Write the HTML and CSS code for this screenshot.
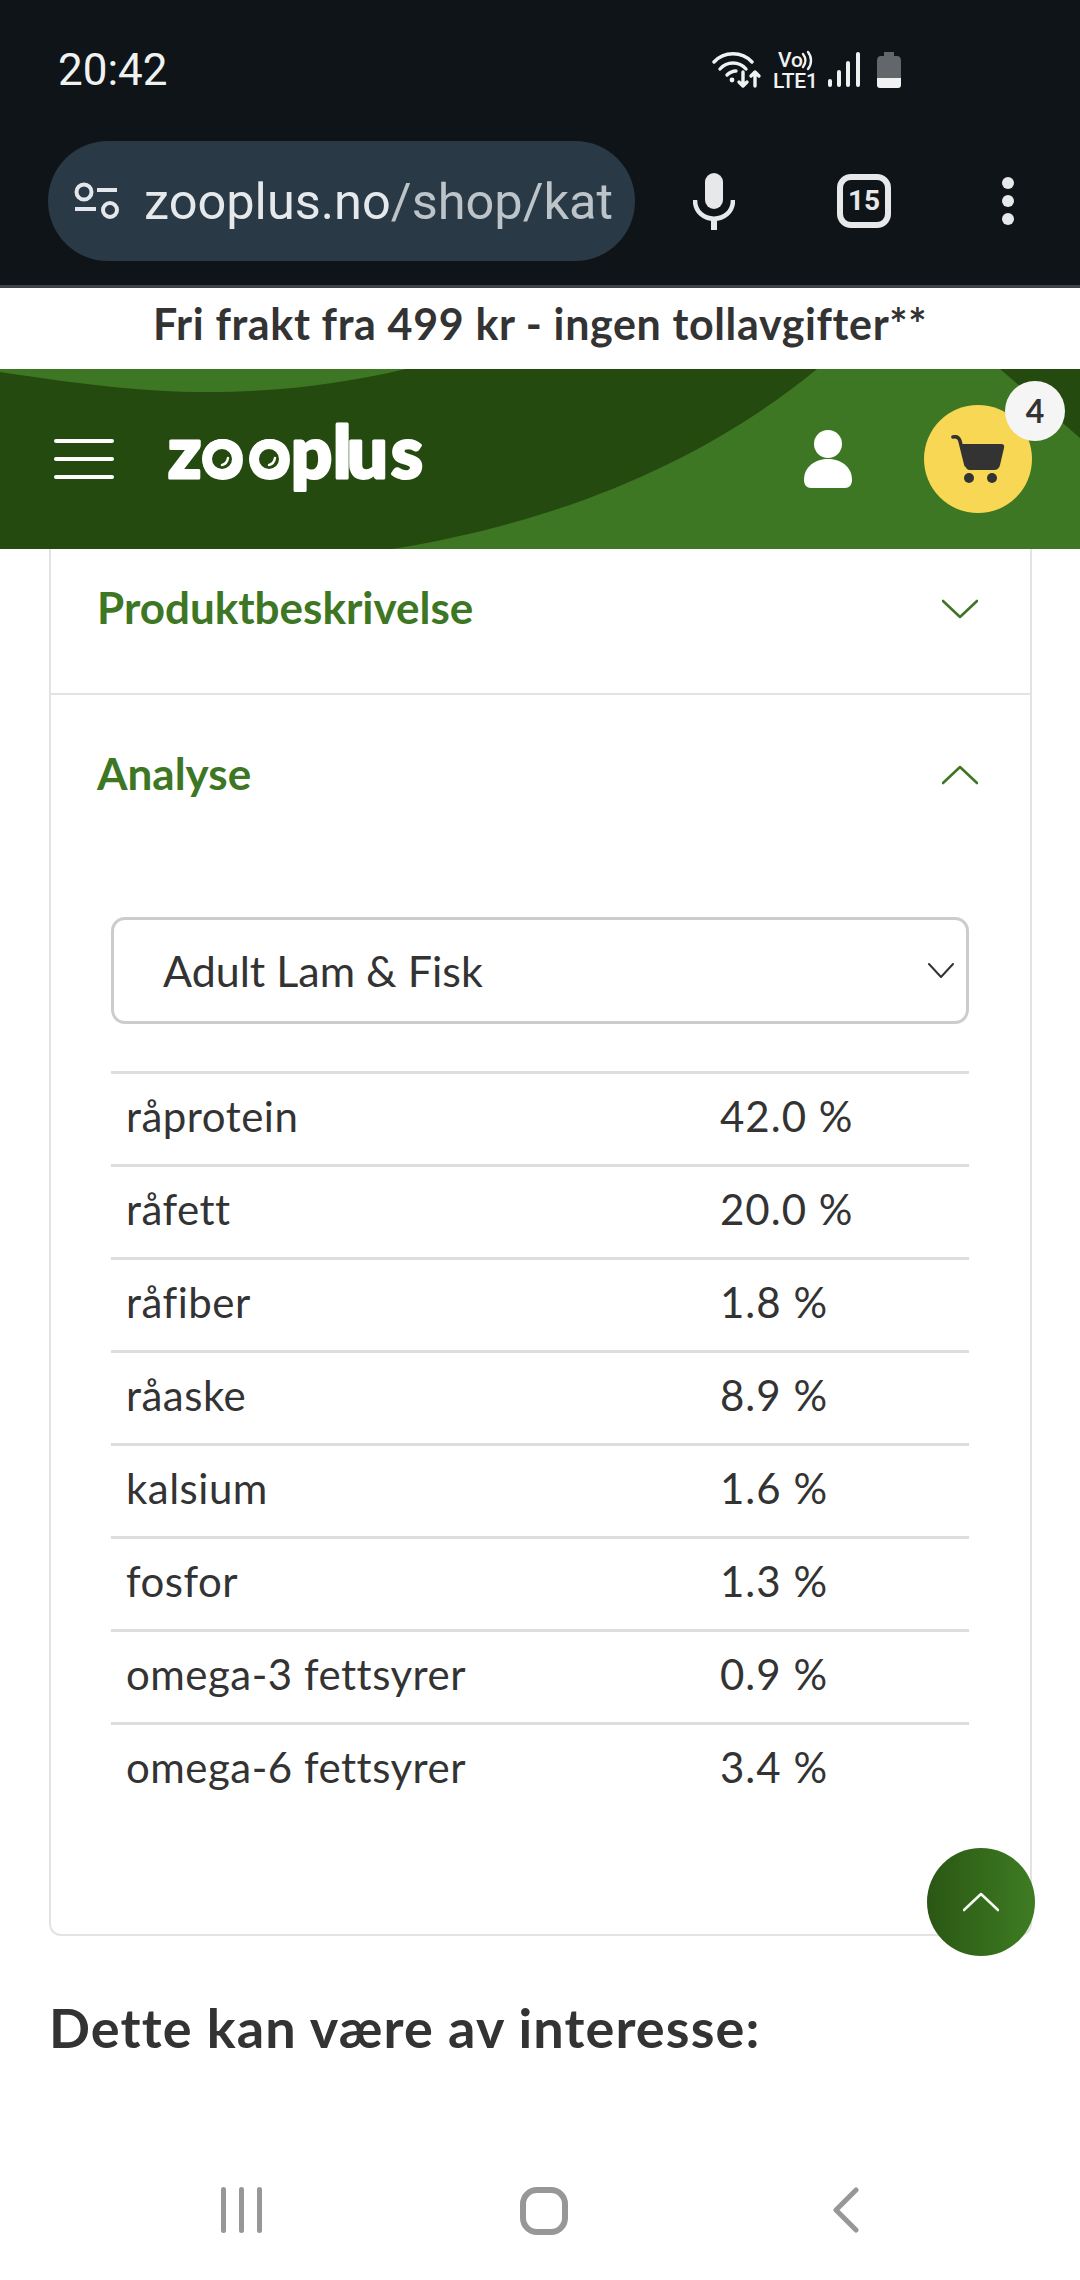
FILE: index.html
```html
<!DOCTYPE html>
<html lang="no">
<head>
  <meta charset="UTF-8" />
  <meta name="viewport" content="width=device-width, initial-scale=1.0"/>
  <title>zooplus - Analyse</title>
  <link rel="stylesheet" href="styles.css">
</head>
<body>

  <!-- Statuslinje og adressefelt -->
  <div class="browser">
    <div class="status">
      <span class="tid">20:42</span>
      <div class="status-ikoner">
        <svg class="ikon-wifi" viewBox="0 0 50 38" fill="none" stroke="#f0f2f2" stroke-width="3.4" stroke-linecap="round" stroke-linejoin="round">
          <path d="M2 11 C12 0 30 0 40 11"/>
          <path d="M8 18 C15 10 27 10 34 18"/>
          <path d="M15 24 C18 21 21 20 24 20"/>
          <circle cx="20" cy="29" r="2.4" fill="#f0f2f2" stroke="none"/>
          <path d="M31 21 V35 M27 31 L31 35 L35 31"/>
          <path d="M43 35 V21 M39 25 L43 21 L47 25"/>
        </svg>
        <svg class="ikon-volte" viewBox="0 -6 46 50">
          <text x="5" y="16" class="volte-tekst">Vo</text>
          <path d="M30 3 C33 7 33 12 30 16 M35 1 C39 6 39 13 35 18" fill="none" stroke="#f0f2f2" stroke-width="2.4" stroke-linecap="round"/>
          <text x="0" y="37" textLength="45" class="volte-tekst">LTE1</text>
        </svg>
        <svg class="ikon-signal" viewBox="0 0 32 36" fill="#f0f2f2">
          <rect x="0" y="27" width="4" height="8" rx="2"/>
          <rect x="9" y="18" width="4" height="17" rx="2"/>
          <rect x="18" y="9" width="4" height="26" rx="2"/>
          <rect x="28" y="0" width="4" height="35" rx="2"/>
        </svg>
        <svg class="ikon-batteri" viewBox="0 0 24 36">
          <path d="M7 0 H17 V4 H20 Q24 4 24 9 V26 H0 V9 Q0 4 4 4 H7 Z" fill="#63676b"/>
          <path d="M0 26 H24 V33 Q24 36 21 36 H3 Q0 36 0 33 Z" fill="#f0f2f2"/>
        </svg>
      </div>
    </div>
    <div class="verktoy">
      <div class="adressefelt">
        <svg class="ikon-tune" viewBox="0 0 46 38" fill="none" stroke="#e3e6ea" stroke-width="4">
          <circle cx="11" cy="10" r="7.5"/>
          <path d="M24 8 H44"/>
          <path d="M2 27 H23"/>
          <circle cx="37" cy="28" r="7"/>
        </svg>
        <span class="url">zooplus.no<span class="url-sti">/shop/kat</span></span>
      </div>
      <svg class="ikon-mic" viewBox="0 0 42 57">
        <rect x="12" y="0" width="18" height="36" rx="9" fill="#e6e8ea"/>
        <path d="M2 27 C2 52 40 52 40 27" fill="none" stroke="#e6e8ea" stroke-width="4.5"/>
        <rect x="18" y="44" width="6" height="13" fill="#e6e8ea"/>
      </svg>
      <div class="faner">15</div>
      <div class="meny-prikker"><i></i><i></i><i></i></div>
    </div>
  </div>

  <div class="frakt">Fri frakt fra 499 kr - ingen tollavgifter**</div>

  <header class="topp">
    <svg class="topp-bg" viewBox="0 0 1080 180" preserveAspectRatio="none">
      <rect width="1080" height="180" fill="#3e7723"/>
      <path d="M0 0 H817 C720 80 580 150 392 180 H0 Z" fill="#254a10"/>
      <path d="M0 3 C80 15 140 23 207 23 C280 23 340 15 406 0 H0 Z" fill="#3e7723"/>
      <path d="M1000 0 L1080 69 V0 Z" fill="#254a10"/>
    </svg>
    <div class="hamburger"><i></i><i></i><i></i></div>
    <svg class="logo" viewBox="-10 -10 280 120">
      <text x="2 36 83 125 167 181 225" y="69" class="logo-tekst">zooplus</text>
      <circle cx="56" cy="50" r="20" fill="#fff"/>
      <circle cx="103" cy="50" r="20" fill="#fff"/>
      <circle cx="56" cy="50" r="10" fill="#254a10"/>
      <circle cx="103" cy="50" r="10" fill="#254a10"/>
      <path d="M62 49 Q61 55 56 56" fill="none" stroke="#fff" stroke-width="2.4" stroke-linecap="round"/>
      <path d="M109 49 Q108 55 103 56" fill="none" stroke="#fff" stroke-width="2.4" stroke-linecap="round"/>
    </svg>
    <svg class="ikon-bruker" viewBox="0 0 48 58" fill="#fff">
      <circle cx="24" cy="14" r="14"/>
      <path d="M0 50 C0 22 48 22 48 50 C48 55 45 58 41 58 H7 C3 58 0 55 0 50 Z"/>
    </svg>
    <div class="handlekurv">
      <svg viewBox="0 0 54 48">
        <path d="M2 2 C6 1 8 3 9 6 L15 30" fill="none" stroke="#333" stroke-width="3.6" stroke-linecap="round"/>
        <path d="M11 9 H50 Q54 9 53 13 L49 30 Q48 35 43 35 H19 Q15 35 14 30 Z" fill="#333"/>
        <circle cx="18" cy="43" r="5" fill="#333"/>
        <circle cx="41" cy="43" r="5" fill="#333"/>
      </svg>
      <span class="antall">4</span>
    </div>
  </header>

  <main>
    <section class="kort">
      <div class="trekkspill-rad lukket">
        <h3>Produktbeskrivelse</h3>
        <svg class="pil" viewBox="0 0 36 20" fill="none" stroke="#3e7723" stroke-width="2.6" stroke-linecap="round" stroke-linejoin="round"><path d="M1 2 L18 18 L35 2"/></svg>
      </div>
      <div class="trekkspill-rad">
        <h3>Analyse</h3>
        <svg class="pil" viewBox="0 0 36 20" fill="none" stroke="#3e7723" stroke-width="2.6" stroke-linecap="round" stroke-linejoin="round"><path d="M1 18 L18 2 L35 18"/></svg>
      </div>
      <div class="analyse">
        <div class="velger">
          <span>Adult Lam &amp; Fisk</span>
          <svg viewBox="0 0 26 15" fill="none" stroke="#333" stroke-width="2" stroke-linecap="round" stroke-linejoin="round"><path d="M1 1 L13 14 L25 1"/></svg>
        </div>
        <table>
          <tr><td>råprotein</td><td>42.0 %</td></tr>
          <tr><td>råfett</td><td>20.0 %</td></tr>
          <tr><td>råfiber</td><td>1.8 %</td></tr>
          <tr><td>råaske</td><td>8.9 %</td></tr>
          <tr><td>kalsium</td><td>1.6 %</td></tr>
          <tr><td>fosfor</td><td>1.3 %</td></tr>
          <tr><td>omega-3 fettsyrer</td><td>0.9 %</td></tr>
          <tr><td>omega-6 fettsyrer</td><td>3.4 %</td></tr>
        </table>
      </div>
    </section>
    <h2>Dette kan være av interesse:</h2>
    <div class="til-toppen">
      <svg viewBox="0 0 36 20" fill="none" stroke="#f5f7f2" stroke-width="2.6" stroke-linecap="round" stroke-linejoin="round"><path d="M1 18 L18 2 L35 18"/></svg>
    </div>
  </main>

  <nav class="android-nav">
    <svg class="nav-siste" viewBox="0 0 41 46" fill="#979797">
      <rect x="0" y="0" width="5" height="46" rx="2.5"/>
      <rect x="18" y="0" width="5" height="46" rx="2.5"/>
      <rect x="36" y="0" width="5" height="46" rx="2.5"/>
    </svg>
    <svg class="nav-hjem" viewBox="0 0 48 48" fill="none" stroke="#979797" stroke-width="6"><rect x="3" y="3" width="42" height="42" rx="14"/></svg>
    <svg class="nav-tilbake" viewBox="0 0 26 46" fill="none" stroke="#979797" stroke-width="5" stroke-linecap="round" stroke-linejoin="round"><path d="M23 3 L3 23 L23 43" /></svg>
  </nav>

</body>
</html>
```

FILE: styles.css
```css
* {
  box-sizing: border-box;
}

body {
  font-family: 'Lato', 'Noto Sans', sans-serif;
  margin: 0;
  width: 1080px;
  height: 2280px;
  overflow: hidden;
  background: #fff;
  color: #333;
  display: flex;
  flex-direction: column;
}

/* nettleser */
.browser {
  background: #0f1418;
  height: 288px;
  border-bottom: 3px solid #3c4449;
  font-family: 'Roboto', sans-serif;
}

.status {
  display: flex;
  justify-content: space-between;
  align-items: center;
  padding: 46px 179px 0 58px;
  height: 94px;
}

.tid {
  color: #f0f2f2;
  font-size: 44px;
  line-height: 48px;
}

.status-ikoner {
  display: flex;
  align-items: center;
  height: 38px;
}

.ikon-wifi {
  width: 50px;
  height: 38px;
}

.ikon-volte {
  width: 46px;
  height: 50px;
  margin-left: 11px;
}

.volte-tekst {
  font-family: 'Roboto', sans-serif;
  font-size: 21px;
  font-weight: 500;
  fill: #f0f2f2;
}

.ikon-signal {
  width: 32px;
  height: 36px;
  margin-left: 9px;
}

.ikon-batteri {
  width: 24px;
  height: 36px;
  margin-left: 17px;
}

.verktoy {
  display: flex;
  align-items: center;
  margin-top: 47px;
  padding-left: 48px;
}

.adressefelt {
  width: 587px;
  height: 120px;
  border-radius: 60px;
  background: #293945;
  display: flex;
  align-items: center;
  padding-left: 25px;
}

.ikon-tune {
  width: 46px;
  height: 38px;
  flex: none;
}

.url {
  margin-left: 25px;
  color: #e6e9ec;
  font-size: 50.5px;
  white-space: nowrap;
}

.url-sti {
  color: #bcc4ca;
}

.ikon-mic {
  width: 42px;
  height: 57px;
  margin-left: 58px;
}

.faner {
  width: 54px;
  height: 54px;
  margin-left: 102px;
  border: 6px solid #e6e8ea;
  border-radius: 14px;
  color: #e6e8ea;
  font-size: 28px;
  font-weight: 700;
  text-align: center;
  line-height: 42px;
}

.meny-prikker {
  margin-left: 111px;
  display: flex;
  flex-direction: column;
  gap: 6px;
}

.meny-prikker i {
  display: block;
  width: 12px;
  height: 12px;
  border-radius: 50%;
  background: #e6e8ea;
}

/* fraktstripe */
.frakt {
  height: 81px;
  text-align: center;
  font-size: 43px;
  font-weight: 700;
  letter-spacing: 0.63px;
  line-height: 72px;
  color: #333;
  white-space: nowrap;
}

/* toppmeny */
.topp {
  position: relative;
  height: 180px;
  flex: none;
  display: flex;
  align-items: center;
  padding-left: 54px;
}

.topp-bg {
  position: absolute;
  left: 0;
  top: 0;
  width: 100%;
  height: 100%;
}

.hamburger {
  position: relative;
  width: 60px;
  display: flex;
  flex-direction: column;
  gap: 14px;
}

.hamburger i {
  display: block;
  height: 4px;
  border-radius: 2px;
  background: #fff;
}

.logo {
  position: relative;
  width: 280px;
  height: 120px;
  margin: 0 -10px 0 42px;
}

.logo-tekst {
  font-family: 'Lato', sans-serif;
  font-size: 72px;
  font-weight: 900;
  fill: #fff;
  stroke: #fff;
  stroke-width: 3;
  stroke-linejoin: round;
}

.ikon-bruker {
  position: relative;
  width: 48px;
  height: 58px;
  margin-left: 378px;
}

.handlekurv {
  position: relative;
  width: 108px;
  height: 108px;
  margin-left: 72px;
  border-radius: 50%;
  background: #f8d755;
  display: flex;
  align-items: center;
  justify-content: center;
}

.handlekurv svg {
  width: 54px;
  height: 48px;
}

.antall {
  position: absolute;
  right: -33px;
  top: -24px;
  width: 60px;
  height: 60px;
  border-radius: 50%;
  background: #f5f5f5;
  font-family: 'Lato', sans-serif;
  font-size: 32px;
  font-weight: 700;
  line-height: 60px;
  text-align: center;
  color: #333;
}

/* innhold */
main {
  position: relative;
  flex: 1;
  padding: 0 49px;
}

.kort {
  width: 983px;
  height: 1387px;
  border: 2px solid #e3e3e3;
  border-top: none;
  border-radius: 0 0 12px 12px;
}

.trekkspill-rad {
  display: flex;
  justify-content: space-between;
  align-items: center;
  height: 160px;
  padding: 0 52px 0 46px;
}

.trekkspill-rad.lukket {
  height: 146px;
  padding-bottom: 24px;
  border-bottom: 2px solid #e3e3e3;
}

.trekkspill-rad h3 {
  margin: 0 0 4px;
  color: #3e7723;
  font-size: 44px;
  font-weight: 700;
}

.pil {
  width: 36px;
  height: 20px;
}

.analyse {
  padding: 62px 61px 0 60px;
}

.velger {
  height: 107px;
  border: 3px solid #ccc;
  border-radius: 14px;
  display: flex;
  justify-content: space-between;
  align-items: center;
  padding: 0 12px 0 49px;
  font-size: 43px;
  color: #333;
}

.velger svg {
  width: 26px;
  height: 15px;
}

table {
  width: 100%;
  margin-top: 47px;
  border-collapse: collapse;
  font-size: 42px;
  letter-spacing: 0.5px;
}

td {
  height: 93px;
  padding: 0 0 7px 15px;
  border-top: 3px solid #ddd;
}

td:first-child {
  width: 594px;
}

td:last-child {
  letter-spacing: 1px;
}

h2 {
  margin: 62px 0 0;
  font-size: 54px;
  letter-spacing: 1.1px;
  line-height: 60px;
  font-weight: 700;
  color: #333;
}

.til-toppen {
  position: absolute;
  left: 927px;
  top: 1299px;
  width: 108px;
  height: 108px;
  border-radius: 50%;
  background: linear-gradient(90deg, #2a5714, #3e7c22);
  display: flex;
  align-items: center;
  justify-content: center;
}

.til-toppen svg {
  width: 36px;
  height: 20px;
}

/* android-knapper */
.android-nav {
  position: absolute;
  left: 0;
  top: 2187px;
  width: 1080px;
  height: 48px;
}

.android-nav svg {
  position: absolute;
  top: 0;
}

.nav-siste {
  left: 221px;
  width: 41px;
  height: 46px;
}

.nav-hjem {
  left: 520px;
  width: 48px;
  height: 48px;
}

.nav-tilbake {
  left: 833px;
  width: 26px;
  height: 46px;
}
```
